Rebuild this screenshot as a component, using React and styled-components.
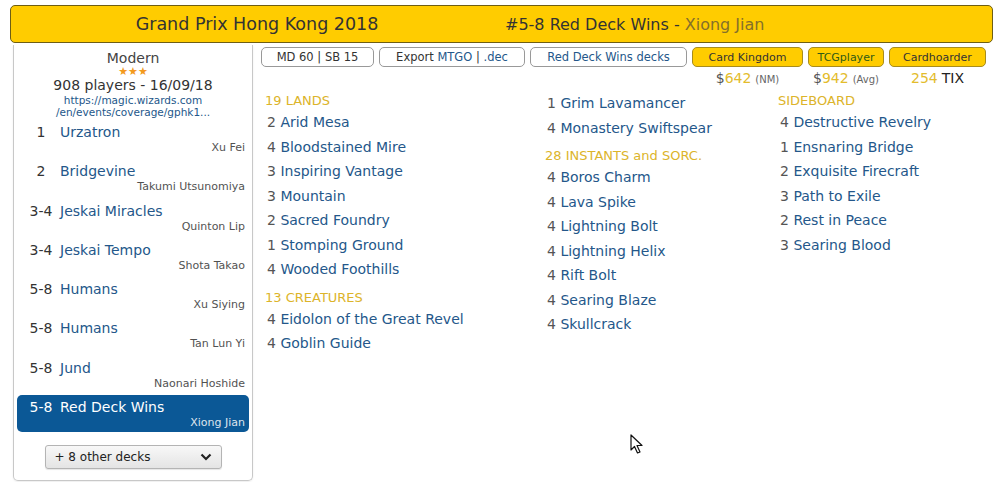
import React from "react";
import styled, {createGlobalStyle} from "styled-components";

const decks = [
  {rank: "1", name: "Urzatron", player: "Xu Fei"},
  {rank: "2", name: "Bridgevine", player: "Takumi Utsunomiya"},
  {rank: "3-4", name: "Jeskai Miracles", player: "Quinton Lip"},
  {rank: "3-4", name: "Jeskai Tempo", player: "Shota Takao"},
  {rank: "5-8", name: "Humans", player: "Xu Siying"},
  {rank: "5-8", name: "Humans", player: "Tan Lun Yi"},
  {rank: "5-8", name: "Jund", player: "Naonari Hoshide"},
  {rank: "5-8", name: "Red Deck Wins", player: "Xiong Jian", selected: true},
];

const columns = [
  [
    {title: "19 LANDS", cards: [
      ["2", "Arid Mesa"], ["4", "Bloodstained Mire"], ["3", "Inspiring Vantage"],
      ["3", "Mountain"], ["2", "Sacred Foundry"], ["1", "Stomping Ground"], ["4", "Wooded Foothills"],
    ]},
    {title: "13 CREATURES", cards: [["4", "Eidolon of the Great Revel"], ["4", "Goblin Guide"]]},
  ],
  [
    {cards: [["1", "Grim Lavamancer"], ["4", "Monastery Swiftspear"]]},
    {title: "28 INSTANTS and SORC.", cards: [
      ["4", "Boros Charm"], ["4", "Lava Spike"], ["4", "Lightning Bolt"], ["4", "Lightning Helix"],
      ["4", "Rift Bolt"], ["4", "Searing Blaze"], ["4", "Skullcrack"],
    ]},
  ],
  [
    {title: "SIDEBOARD", cards: [
      ["4", "Destructive Revelry"], ["1", "Ensnaring Bridge"], ["2", "Exquisite Firecraft"],
      ["3", "Path to Exile"], ["2", "Rest in Peace"], ["3", "Searing Blood"],
    ]},
  ],
];

const stores = [
  {name: "Card Kingdom", width: 111, price: "642", unit: "(NM)", dollar: true},
  {name: "TCGplayer", width: 76, price: "942", unit: "(Avg)", dollar: true},
  {name: "Cardhoarder", width: 97, price: "254", tix: true},
];

const GlobalStyle = createGlobalStyle`
  body {
    margin: 0;
    background: #fff;
    font-family: "DejaVu Sans", Verdana, sans-serif;
    color: #333;
  }
`;

export default function App() {
  return (
    <Page>
      <GlobalStyle />
      <TitleBar>
        <EventTitle>Grand Prix Hong Kong 2018</EventTitle>
        <DeckTitle>#5-8 Red Deck Wins - <span>Xiong Jian</span></DeckTitle>
      </TitleBar>
      <Main>
        <Sidebar>
          <Format>Modern</Format>
          <Stars>★★★</Stars>
          <Players>908 players - 16/09/18</Players>
          <Url>https://magic.wizards.com<br />/en/events/coverage/gphk1...</Url>
          <DeckList>
            {decks.map((d, i) => (
              <DeckItem key={i} $selected={d.selected}>
                <DeckLine>
                  <Rank>{d.rank}</Rank>
                  <DeckName $selected={d.selected}>{d.name}</DeckName>
                </DeckLine>
                <Player>{d.player}</Player>
              </DeckItem>
            ))}
          </DeckList>
          <OtherDecks>
            <span>+ 8 other decks</span>
            <svg width="12" height="8" viewBox="0 0 12 8">
              <path d="M1.5 1.5 L6 6 L10.5 1.5" fill="none" stroke="#222" strokeWidth="2.2" />
            </svg>
          </OtherDecks>
        </Sidebar>
        <Content>
          <Toolbar>
            <Button $w={113}><span>MD 60 | SB 15</span></Button>
            <Button $w={146}><span>Export <Link>MTGO</Link> | <Link>.dec</Link></span></Button>
            <Button $w={157}><Link>Red Deck Wins decks</Link></Button>
            {stores.map(s => (
              <Store key={s.name}>
                <Button $w={s.width} $shop>
                  {s.name === "TCGplayer" ? <Green>TCGplayer</Green> : <span>{s.name}</span>}
                </Button>
                <Price>
                  {s.dollar && <Dollar>$</Dollar>}
                  <Amount>{s.price}</Amount>
                  {s.unit && <Unit>{s.unit}</Unit>}
                  {s.tix && <Tix>TIX</Tix>}
                </Price>
              </Store>
            ))}
          </Toolbar>
          <Cards>
            {columns.map((col, ci) => (
              <Column key={ci}>
                {col.map((sec, si) => (
                  <React.Fragment key={si}>
                    {sec.title && <SectionTitle $first={si === 0}>{sec.title}</SectionTitle>}
                    {sec.cards.map(([n, name]) => (
                      <CardRow key={name}>
                        <Count>{n}</Count> <CardName>{name}</CardName>
                      </CardRow>
                    ))}
                  </React.Fragment>
                ))}
              </Column>
            ))}
          </Cards>
        </Content>
      </Main>
      <Cursor width="14" height="21" viewBox="0 0 14 21">
        <path d="M1 1 L1 16 L4.5 12.5 L7.5 19 L10 18 L7 11.5 L12 11.5 Z" fill="#fff" stroke="#111" strokeWidth="1.2" strokeLinejoin="round" />
      </Cursor>
    </Page>
  );
}

const Page = styled.div`
  position: relative;
  width: 1000px;
  height: 482px;
  padding: 5px 7px 0 10px;
  box-sizing: border-box;
  overflow: hidden;
`;

const TitleBar = styled.div`
  display: grid;
  grid-template-columns: 494px 1fr;
  align-items: center;
  height: 38px;
  box-sizing: border-box;
  background: #ffcc00;
  border: 1px solid #6e5e14;
  border-radius: 5px;
  color: #333;
`;

const EventTitle = styled.div`
  padding-right: 2px;
  text-align: center;
  font-size: 17.5px;
`;

const DeckTitle = styled.div`
  font-size: 16px;

  span {
    color: #85702a;
  }
`;

const Main = styled.div`
  display: flex;
  gap: 8px;
  padding-left: 3px;
  margin-top: 2px;
`;

const Sidebar = styled.div`
  width: 240px;
  height: 436px;
  box-sizing: border-box;
  border: 1px solid #c8c8c8;
  border-top: none;
  border-radius: 0 0 5px 5px;
  padding: 4px 3px 0;
  display: flex;
  flex-direction: column;
  align-items: center;
  box-shadow: 0 1px 2px rgba(0, 0, 0, 0.08);
`;

const Format = styled.div`
  font-size: 14px;
  line-height: 18px;
  color: #444;
`;

const Stars = styled.div`
  font-size: 11px;
  line-height: 9px;
  height: 9px;
  color: #f39a1e;
`;

const Players = styled.div`
  font-size: 14px;
  line-height: 18px;
  color: #333;
`;

const Url = styled.div`
  font-size: 10.5px;
  line-height: 12px;
  color: #24578a;
  text-align: center;
`;

const DeckList = styled.div`
  align-self: stretch;
  margin-top: 2px;
`;

const DeckItem = styled.div`
  height: 37px;
  box-sizing: border-box;
  margin-bottom: 2.3px;
  padding: 4px 4px 0 9px;
  border-radius: 5px;
  background: ${p => (p.$selected ? "#0b5896" : "transparent")};
  color: ${p => (p.$selected ? "#fff" : "#333")};
`;

const DeckLine = styled.div`
  display: flex;
  align-items: center;
  gap: 4px;
  font-size: 14px;
  line-height: 17px;
`;

const Rank = styled.span`
  width: 30px;
  text-align: center;
`;

const DeckName = styled.span`
  color: ${p => (p.$selected ? "#fff" : "#24578a")};
`;

const Player = styled.div`
  text-align: right;
  font-size: 11px;
  line-height: 13px;
  opacity: 0.85;
`;

const OtherDecks = styled.div`
  margin-top: 11px;
  width: 177px;
  height: 24px;
  box-sizing: border-box;
  display: flex;
  align-items: center;
  justify-content: space-between;
  padding: 0 9px;
  font-size: 12px;
  color: #222;
  background: linear-gradient(#f8f8f8, #e4e4e4);
  border: 1px solid #b4b4b4;
  border-radius: 3px;
  box-shadow: 0 1px 1px rgba(0, 0, 0, 0.1);
`;

const Content = styled.div`
  flex: 1;
  padding-top: 2px;
`;

const Toolbar = styled.div`
  display: flex;
  align-items: flex-start;
  gap: 5px;
`;

const Button = styled.div`
  width: ${p => p.$w}px;
  height: 20px;
  box-sizing: border-box;
  display: flex;
  align-items: center;
  justify-content: center;
  white-space: pre;
  font-size: ${p => (p.$shop ? 11 : 11.5)}px;
  color: #333;
  background: ${p => (p.$shop ? "#ffcc00" : "#fff")};
  border: 1px solid ${p => (p.$shop ? "#a88c1c" : "#999")};
  border-radius: 5px;
`;

const Link = styled.span`
  color: #24578a;
`;

const Green = styled.span`
  color: #2f5a16;
`;

const Store = styled.div`
  display: flex;
  flex-direction: column;
  align-items: center;
`;

const Price = styled.div`
  margin-top: 2px;
  line-height: 18px;
  font-size: 14px;
  white-space: nowrap;
`;

const Dollar = styled.span`
  color: #555;
`;

const Amount = styled.span`
  color: #e3bc2c;
`;

const Unit = styled.span`
  margin-left: 4px;
  font-size: 10px;
  color: #666;
`;

const Tix = styled.span`
  margin-left: 4px;
  color: #222;
`;

const Cards = styled.div`
  display: grid;
  grid-template-columns: 280px 233px 1fr;
  margin-top: 2px;
  padding-left: 4px;
`;

const Column = styled.div`
  display: flex;
  flex-direction: column;
`;

const SectionTitle = styled.div`
  margin-top: ${p => (p.$first ? 0 : 6)}px;
  height: 19px;
  line-height: 19px;
  font-size: 13px;
  color: #dcb42a;
`;

const CardRow = styled.div`
  height: 24.5px;
  line-height: 24.5px;
  padding-left: 2px;
  font-size: 14px;
  white-space: nowrap;
`;

const Count = styled.span`
  color: #555;
`;

const CardName = styled.span`
  color: #24578a;
`;

const Cursor = styled.svg`
  position: absolute;
  left: 630px;
  top: 434px;
`;
